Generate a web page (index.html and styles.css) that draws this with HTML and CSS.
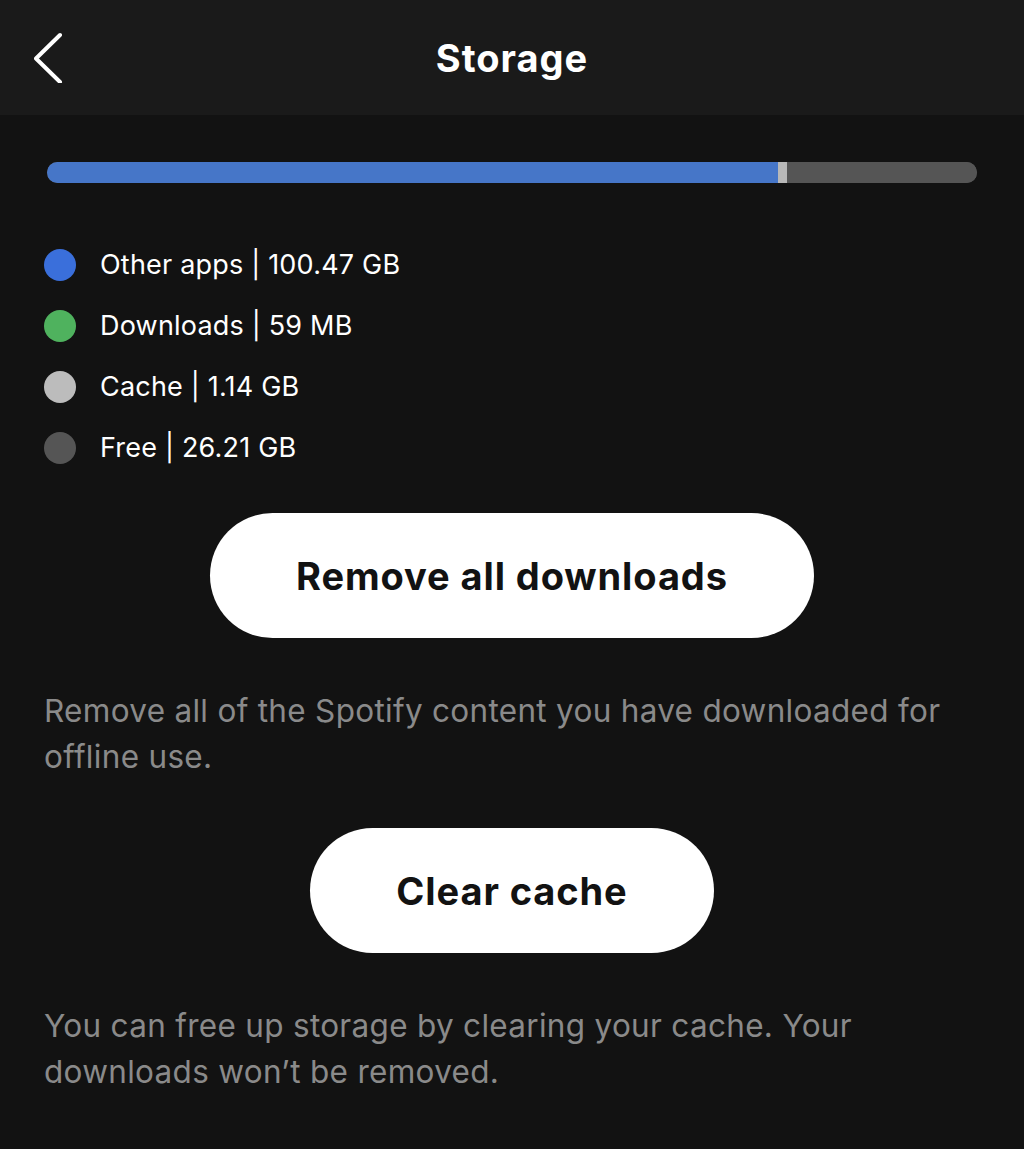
FILE: index.html
```html
<!DOCTYPE html>
<html>
<head>
  <meta charset="UTF-8">
  <meta name="viewport" content="width=device-width,initial-scale=1.0">
  <title>Storage</title>
  <link rel="stylesheet" href="styles.css">
</head>
<body>
  <header class="topbar">
    <a class="back" href="#" aria-label="Back">
      <svg width="30" height="52" viewBox="0 0 30 52">
        <polyline points="26,4 2,27.5 26,51" fill="none" stroke="#fff" stroke-width="4" stroke-linecap="round" stroke-linejoin="round"/>
      </svg>
    </a>
    <h1>Storage</h1>
  </header>

  <main class="storage">
    <div class="usage-bar">
      <span class="seg seg-apps" style="width: 78.6%"></span>
      <span class="seg seg-cache" style="width: 1%"></span>
      <span class="seg seg-free"></span>
    </div>

    <ul class="legend">
      <li><span class="dot dot-apps"></span>Other apps | 100.47 GB</li>
      <li><span class="dot dot-downloads"></span>Downloads | 59 MB</li>
      <li><span class="dot dot-cache"></span>Cache | 1.14 GB</li>
      <li><span class="dot dot-free"></span>Free | 26.21 GB</li>
    </ul>

    <div class="action">
      <button type="button">Remove all downloads</button>
    </div>
    <p class="note">Remove all of the Spotify content you have downloaded for offline use.</p>

    <div class="action">
      <button type="button">Clear cache</button>
    </div>
    <p class="note">You can free up storage by clearing your cache. Your downloads won’t be removed.</p>
  </main>
</body>
</html>
```

FILE: styles.css
```css
body {
  margin: 0;
  background: #121212;
  color: #fff;
  font-family: Inter, "Liberation Sans", sans-serif;
  min-height: 100vh;
}

.topbar {
  height: 115px;
  background: #1a1a1a;
  display: flex;
  align-items: center;
  justify-content: center;
  position: relative;
}

.topbar h1 {
  margin: 0;
  font-size: 38px;
  font-weight: 700;
  letter-spacing: 1px;
}

.back {
  position: absolute;
  left: 34px;
  top: 31px;
  display: block;
  width: 30px;
  height: 52px;
}

.back svg {
  display: block;
}

.storage {
  padding: 47px 44px 0;
}

.usage-bar {
  display: flex;
  height: 21px;
  margin: 0 3px;
  border-radius: 11px;
  overflow: hidden;
  background: #555;
}

.seg {
  display: block;
  height: 100%;
}

.seg-apps {
  background: #4676c8;
}

.seg-cache {
  background: #b8b8b8;
}

.seg-free {
  flex: 1;
  background: #555;
}

.legend {
  list-style: none;
  margin: 51px 0 0;
  padding: 0;
}

.legend li {
  display: flex;
  align-items: center;
  height: 61px;
  font-size: 27px;
  letter-spacing: 0.2px;
}

.dot {
  width: 32px;
  height: 32px;
  border-radius: 50%;
  margin-right: 24px;
  flex-shrink: 0;
}

.dot-apps { background: #3a6fdb; }
.dot-downloads { background: #4fb25e; }
.dot-cache { background: #bcbcbc; }
.dot-free { background: #555; }

.action {
  display: flex;
  justify-content: center;
  margin-top: 35px;
}

.note + .action {
  margin-top: 48px;
}

.action button {
  height: 125px;
  padding: 0 86px;
  border: none;
  border-radius: 63px;
  background: #fff;
  color: #121212;
  font-family: inherit;
  font-size: 38px;
  font-weight: 700;
  letter-spacing: 0.9px;
  cursor: pointer;
}

.note {
  margin: 50px 0 0;
  color: #8a8a8a;
  font-size: 31.5px;
  letter-spacing: 0.3px;
  line-height: 46px;
}
```
